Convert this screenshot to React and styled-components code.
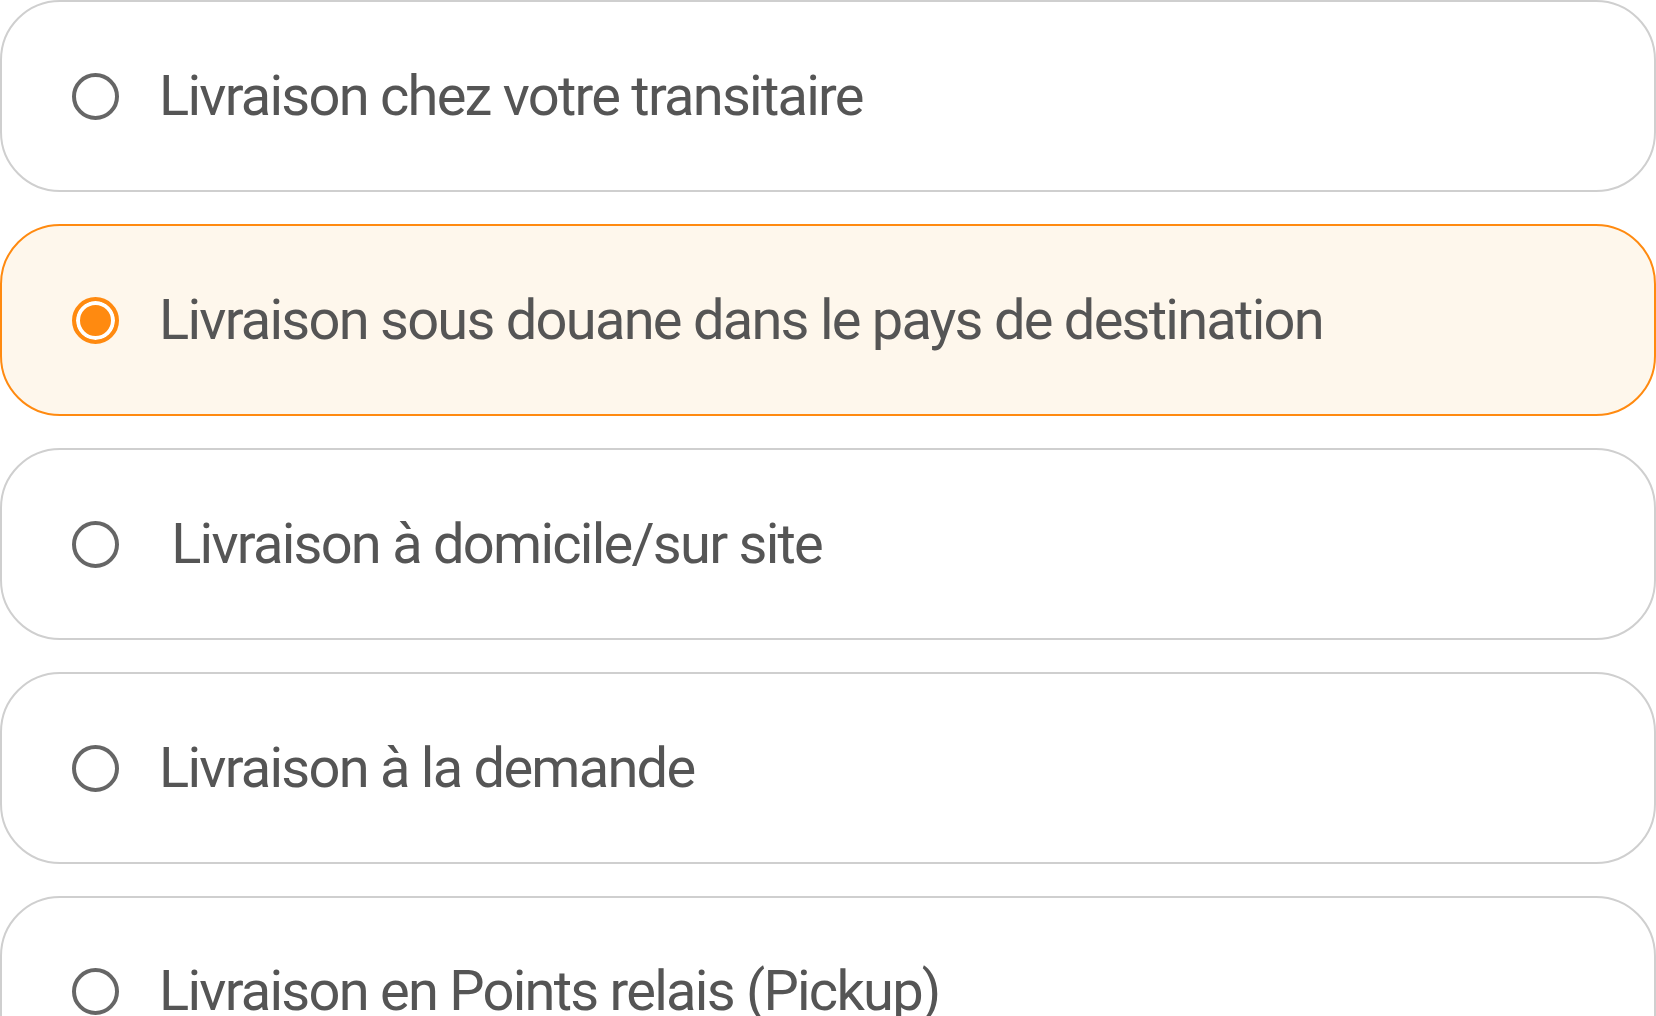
import React, { useState } from "react";
import styled, { createGlobalStyle } from "styled-components";

const GlobalStyle = createGlobalStyle`
  html, body {
    margin: 0;
    padding: 0;
    background: #ffffff;
  }
  body {
    font-family: Roboto, Inter, "Liberation Sans", sans-serif;
    -webkit-font-smoothing: antialiased;
  }
`;

const options = [
  "Livraison chez votre transitaire",
  "Livraison sous douane dans le pays de destination",
  " Livraison à domicile/sur site",
  "Livraison à la demande",
  "Livraison en Points relais (Pickup)",
];

const App = () => {
  const [selected, setSelected] = useState(1);

  return (
    <>
      <GlobalStyle />
      <List>
        {options.map((label, i) => (
          <Option
            key={label}
            $active={selected === i}
            $tall={i === options.length - 1}
            onClick={() => setSelected(i)}
          >
            <Radio $active={selected === i} />
            <Label>{label}</Label>
          </Option>
        ))}
      </List>
    </>
  );
};

export default App;

const List = styled.div`
  display: flex;
  flex-direction: column;
  gap: 32px;
  width: 1656px;
  height: 1016px;
  overflow: hidden;
`;

const Option = styled.div`
  flex-shrink: 0;
  box-sizing: border-box;
  display: flex;
  align-items: center;
  gap: 40px;
  height: ${p => (p.$tall ? "230px" : "192px")};
  padding: ${p => (p.$tall ? "0 0 40px 70px" : "0 0 0 70px")};
  border: 2px solid ${p => (p.$active ? "#ff8a10" : "#cfcfcf")};
  border-radius: 60px;
  background: ${p => (p.$active ? "#fef7ec" : "#ffffff")};
  cursor: pointer;
`;

const Radio = styled.span`
  flex-shrink: 0;
  box-sizing: border-box;
  width: 47px;
  height: 47px;
  border-radius: 50%;
  border: 4px solid ${p => (p.$active ? "#ff8a10" : "#666666")};
  background: ${p => (p.$active ? "#ff8a10" : "transparent")};
  box-shadow: ${p => (p.$active ? "inset 0 0 0 4px #ffffff" : "none")};
`;

const Label = styled.span`
  white-space: pre;
  font-size: 56px;
  font-weight: 400;
  color: #555555;
  letter-spacing: -1.75px;
`;
